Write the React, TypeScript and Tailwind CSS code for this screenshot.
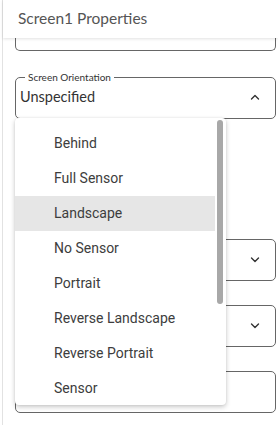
import React from "react";

const Chevron = ({ up }: { up?: boolean }) => (
  <svg width="10" height="6" viewBox="0 0 10 6" fill="none" className="block">
    {up ? (
      <polyline points="1.5,5 5,1.5 8.5,5" stroke="#333" strokeWidth="1.4" strokeLinecap="round" strokeLinejoin="round" />
    ) : (
      <polyline points="1.5,1 5,4.5 8.5,1" stroke="#333" strokeWidth="1.4" strokeLinecap="round" strokeLinejoin="round" />
    )}
  </svg>
);

const items = [
  "Behind",
  "Full Sensor",
  "Landscape",
  "No Sensor",
  "Portrait",
  "Reverse Landscape",
  "Reverse Portrait",
  "Sensor",
];

export default function App() {
  return (
    <div className="w-[278px] h-[425px] bg-white overflow-hidden relative pl-[2px]" style={{ fontFamily: "Lato, 'Open Sans', sans-serif" }}>
      <div className="h-full border-l border-[#e2e2e2] flex flex-col">
        <div className="h-[38px] shrink-0 flex items-center pl-[15px] bg-white relative z-10 shadow-[0_1px_3px_rgba(0,0,0,0.12)]">
          <span className="text-[15.5px] text-[#555]">Screen1 Properties</span>
        </div>
        <div className="flex flex-col ml-[12px] mr-[2px]">
          <div className="h-[13px] border border-t-0 border-[#666] rounded-b-[5px]" />
          <fieldset className="mt-[20px] h-[48px] border border-[#666] rounded-[5px] p-0 m-0 min-w-0">
            <legend className="ml-[9px] px-[3px] text-[10px] leading-[12px] text-[#333]">Screen Orientation</legend>
            <div className="h-[28px] flex items-center justify-between pl-[4px] pr-[15px]">
              <span className="text-[14.5px] text-[#333]">Unspecified</span>
              <Chevron up />
            </div>
          </fieldset>
          <div className="mt-[120px] h-[42px] border border-[#666] rounded-[5px] flex items-center justify-end pr-[15px]">
            <Chevron />
          </div>
          <div className="mt-[24px] h-[42px] border border-[#666] rounded-[5px] flex items-center justify-end pr-[15px]">
            <Chevron />
          </div>
          <div className="mt-[24px] h-[42px] border border-[#666] rounded-[5px]" />
        </div>
      </div>
      <div className="absolute left-[15px] top-[118px] w-[211px] h-[287px] bg-white rounded-[4px] shadow-[0_2px_5px_rgba(0,0,0,0.22),0_0_2px_rgba(0,0,0,0.08)] overflow-hidden z-20">
        <div className="w-[200px] pt-[8px]" style={{ fontFamily: "Roboto, sans-serif" }}>
          {items.map((it) => (
            <div
              key={it}
              className={`h-[35px] flex items-center pl-[39px] text-[14px] text-[#3d3d3d] ${it === "Landscape" ? "bg-[#e6e6e6]" : ""}`}
            >
              {it}
            </div>
          ))}
        </div>
        <div className="absolute left-[202px] top-[2px] w-[6px] h-[184px] rounded-full bg-[#a8a8a8]" />
      </div>
    </div>
  );
}
